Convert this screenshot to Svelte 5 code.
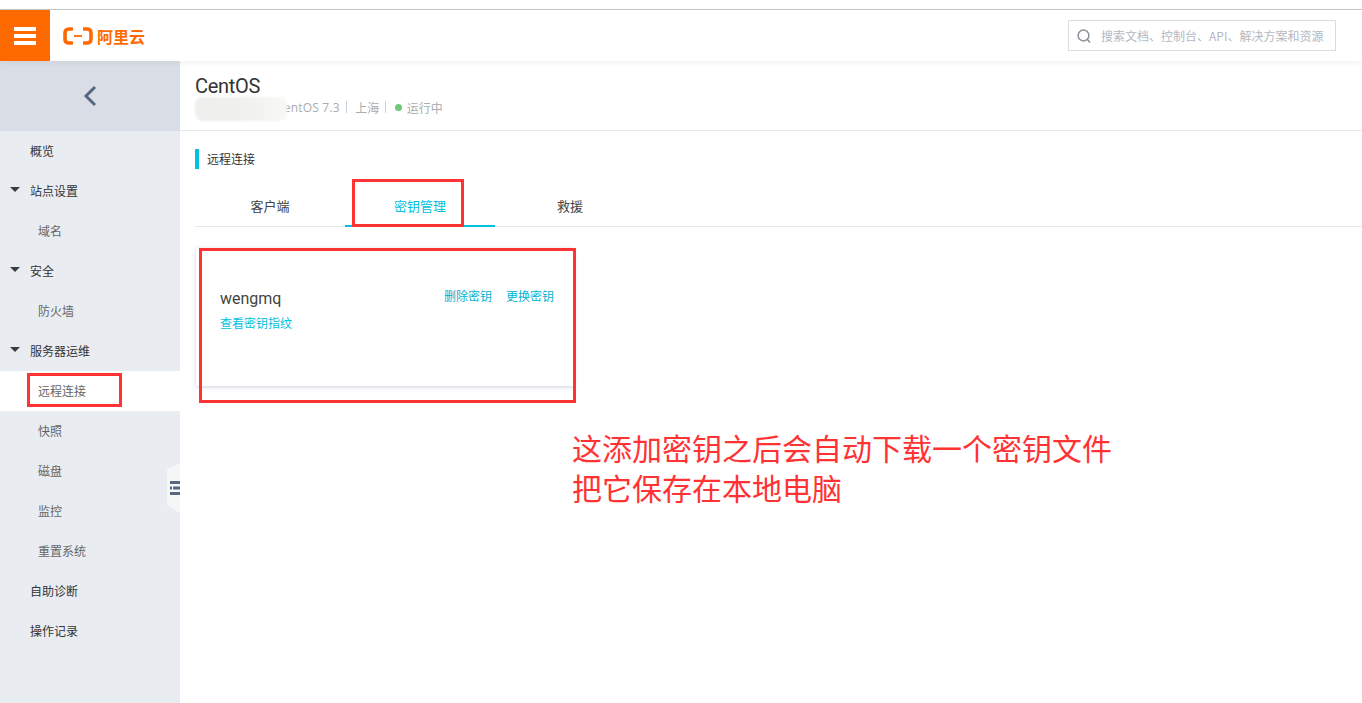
<script>
  const navItems = [
    { label: '概览', level: 1 },
    { label: '站点设置', level: 1, arrow: true },
    { label: '域名', level: 2 },
    { label: '安全', level: 1, arrow: true },
    { label: '防火墙', level: 2 },
    { label: '服务器运维', level: 1, arrow: true },
    { label: '远程连接', level: 2, active: true },
    { label: '快照', level: 2 },
    { label: '磁盘', level: 2 },
    { label: '监控', level: 2 },
    { label: '重置系统', level: 2 },
    { label: '自助诊断', level: 1 },
    { label: '操作记录', level: 1 }
  ];

  const tabs = [
    { label: '客户端' },
    { label: '密钥管理', active: true },
    { label: '救援' }
  ];
</script>

<div class="page">
  <div class="top-strip"></div>

  <header class="topbar">
    <button class="menu-btn" aria-label="菜单">
      <span></span><span></span><span></span>
    </button>
    <div class="logo">
      <svg width="30" height="18" viewBox="0 0 30 18" fill="none" stroke="#ff6a00" stroke-width="3.6">
        <path d="M10 2 H6 Q2 2 2 6 V12 Q2 16 6 16 H10" />
        <path d="M20 2 H24 Q28 2 28 6 V12 Q28 16 24 16 H20" />
        <path d="M11 9 H19" stroke-width="1.8" />
      </svg>
      <span>阿里云</span>
    </div>
    <div class="search">
      <svg width="16" height="16" viewBox="0 0 16 16" fill="none" stroke="#8a8f99" stroke-width="1.5">
        <circle cx="7.5" cy="7.5" r="5.4" />
        <path d="M11 11 L14 14.5" />
      </svg>
      <span>搜索文档、控制台、API、解决方案和资源</span>
    </div>
  </header>

  <div class="body">
    <aside class="sidebar">
      <div class="back">
        <svg width="16" height="24" viewBox="0 0 16 24" fill="none" stroke="#56687f" stroke-width="3">
          <path d="M13 3 L4 12 L13 21" />
        </svg>
      </div>
      <nav>
        {#each navItems as item}
          <div class="nav-item" class:sub={item.level === 2} class:active={item.active}>
            {#if item.arrow}<i class="arrow"></i>{/if}
            {item.label}
          </div>
        {/each}
      </nav>
      <div class="collapse">
        <svg width="10" height="14" viewBox="0 0 10 14" fill="#56687f">
          <rect x="0" y="0" width="10" height="3" />
          <rect x="0" y="5.5" width="2" height="3" />
          <rect x="3" y="5.5" width="7" height="3" />
          <rect x="0" y="11" width="10" height="3" />
        </svg>
      </div>
    </aside>

    <main class="content">
      <section class="instance">
        <h1>CentOS</h1>
        <div class="meta">
          <span class="blurred"></span>
          <span class="os">CentOS 7.3</span>
          <i class="sep"></i>
          <span>上海</span>
          <i class="sep"></i>
          <i class="dot"></i>
          <span>运行中</span>
        </div>
      </section>

      <section class="panel">
        <h2>远程连接</h2>
        <div class="tabs">
          {#each tabs as tab}
            <div class="tab" class:active={tab.active}>{tab.label}</div>
          {/each}
        </div>
        <div class="card">
          <div class="card-head">
            <span class="key-name">wengmq</span>
            <div class="card-actions">
              <a href="#delete">删除密钥</a>
              <a href="#replace">更换密钥</a>
            </div>
          </div>
          <a class="fingerprint" href="#fingerprint">查看密钥指纹</a>
        </div>
      </section>
    </main>
  </div>

  <!-- annotations drawn on top of the screenshot -->
  <div class="mark mark-nav"></div>
  <div class="mark mark-tab"></div>
  <div class="mark mark-card"></div>
  <div class="note">这添加密钥之后会自动下载一个密钥文件<br />把它保存在本地电脑</div>
</div>

<style>
  :global(body) {
    margin: 0;
    background: #fff;
  }

  .page {
    position: relative;
    width: 1362px;
    height: 703px;
    overflow: hidden;
    font-family: "Noto Sans CJK SC", "Noto Sans", sans-serif;
    font-size: 12px;
    color: #333;
  }

  .top-strip {
    height: 9px;
    background: #fff;
    border-bottom: 1px solid #c8c8c8;
  }

  .topbar {
    position: relative;
    z-index: 1;
    display: flex;
    align-items: center;
    height: 51px;
    background: #fff;
    box-shadow: 0 2px 6px rgba(0, 0, 0, 0.05);
  }

  .menu-btn {
    display: flex;
    flex-direction: column;
    justify-content: center;
    gap: 3px;
    width: 50px;
    height: 51px;
    padding: 0 14px;
    border: 0;
    background: #ff6a00;
  }

  .menu-btn span {
    display: block;
    height: 4px;
    background: #fff;
  }

  .logo {
    display: flex;
    align-items: center;
    gap: 4px;
    margin-left: 13px;
    color: #ff6a00;
    font-size: 16px;
    font-weight: 700;
    line-height: 20px;
  }

  .search {
    display: flex;
    align-items: center;
    gap: 9px;
    box-sizing: border-box;
    width: 268px;
    height: 31px;
    margin-left: auto;
    margin-right: 26px;
    padding-left: 7px;
    border: 1px solid #dcdcdc;
    color: #b4b8bf;
    white-space: nowrap;
  }

  .body {
    display: flex;
    height: 642px;
  }

  .sidebar {
    position: relative;
    flex: none;
    width: 180px;
    background: #e9edf2;
  }

  .back {
    display: flex;
    align-items: center;
    justify-content: center;
    height: 70px;
    background: #d9dee6;
  }

  .nav-item {
    position: relative;
    height: 40px;
    padding-left: 30px;
    line-height: 40px;
    color: #333;
  }

  .nav-item.sub {
    padding-left: 38px;
    color: #666;
  }

  .nav-item.active {
    background: #fff;
  }

  .arrow {
    position: absolute;
    left: 10px;
    top: 16px;
    width: 0;
    height: 0;
    border-left: 5px solid transparent;
    border-right: 5px solid transparent;
    border-top: 5px solid #373d41;
  }

  .collapse {
    position: absolute;
    right: 0;
    top: 402px;
    display: flex;
    align-items: center;
    justify-content: flex-end;
    width: 13px;
    height: 50px;
    background: #f5f6f8;
    clip-path: polygon(0 14%, 100% 0, 100% 100%, 0 84%);
  }

  .content {
    flex: 1;
    min-width: 0;
  }

  .instance {
    box-sizing: border-box;
    height: 70px;
    padding: 12px 15px 0;
    border-bottom: 1px solid #e6e9ee;
  }

  h1 {
    margin: 0;
    font-family: Roboto, "Noto Sans", sans-serif;
    font-size: 20px;
    font-weight: 400;
    line-height: 26px;
    letter-spacing: -0.3px;
    color: #333;
  }

  .meta {
    position: relative;
    display: flex;
    align-items: center;
    height: 20px;
    margin-top: -2px;
    color: #a8abb0;
  }

  .os {
    margin-left: 81px;
    font-family: "Open Sans", "Noto Sans", sans-serif;
    letter-spacing: 0.2px;
  }

  .blurred {
    position: absolute;
    left: 0;
    top: 0;
    z-index: 1;
    width: 92px;
    height: 24px;
    border-radius: 8px;
    background: linear-gradient(90deg, #efefee, #f1f1f0 60%, #f8f8f6);
    filter: blur(1px);
  }

  .sep {
    width: 1px;
    height: 12px;
    margin: 0 8.5px 0 6px;
    background: #c4cede;
  }

  .dot {
    width: 7px;
    height: 7px;
    margin-right: 5px;
    border-radius: 50%;
    background: #6cc97e;
  }

  .panel {
    padding: 18px 0 0 15px;
  }

  h2 {
    margin: 0;
    height: 20px;
    padding-left: 8px;
    border-left: 4px solid #00c1de;
    font-size: 12px;
    font-weight: 400;
    line-height: 20px;
    color: #333;
  }

  .tabs {
    display: flex;
    height: 46px;
    margin-top: 11px;
    border-bottom: 1px solid #e6e9ee;
  }

  .tab {
    box-sizing: border-box;
    width: 150px;
    height: 47px;
    padding-top: 14px;
    font-size: 13px;
    line-height: 24px;
    text-align: center;
    color: #444;
  }

  .tab.active {
    border-bottom: 2px solid #00c1de;
    color: #00c1de;
  }

  .card {
    box-sizing: border-box;
    width: 378px;
    height: 138px;
    margin-top: 21px;
    margin-left: 1px;
    padding: 38px 20px 0 24px;
    background: #fff;
    box-shadow: 0 1px 4px rgba(60, 80, 110, 0.25);
  }

  .card-head {
    display: flex;
    justify-content: space-between;
    align-items: flex-start;
  }

  .key-name {
    font-family: Roboto, "Noto Sans", sans-serif;
    font-size: 16px;
    line-height: 26px;
    color: #444;
  }

  .card-actions {
    display: flex;
    gap: 14px;
    line-height: 20px;
  }

  a {
    color: #00b4d2;
    text-decoration: none;
  }

  .fingerprint {
    display: block;
    margin-top: 1px;
    line-height: 20px;
    color: #00c1de;
  }

  .mark {
    position: absolute;
    box-sizing: border-box;
    border: 3px solid #ff3333;
  }

  .mark-nav {
    left: 27px;
    top: 373px;
    width: 95px;
    height: 34px;
  }

  .mark-tab {
    left: 352px;
    top: 179px;
    width: 112px;
    height: 48px;
  }

  .mark-card {
    left: 199px;
    top: 248px;
    width: 377px;
    height: 155px;
  }

  .note {
    position: absolute;
    left: 572px;
    top: 427px;
    font-size: 30px;
    line-height: 40px;
    color: #ff3333;
    white-space: nowrap;
  }
</style>
